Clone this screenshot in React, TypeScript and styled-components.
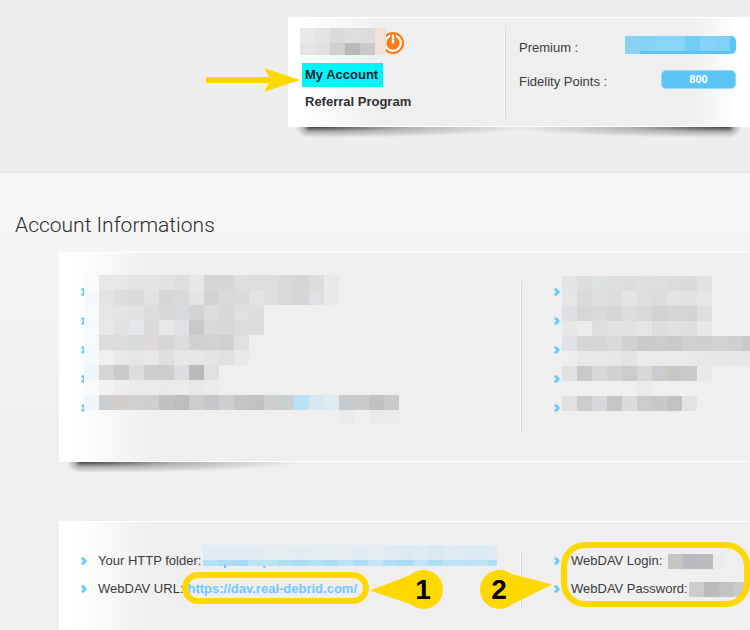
import React from 'react';
import styled, { createGlobalStyle, css } from 'styled-components';

const BLUE = '#5bc5f5';
const YELLOW = '#ffd800';

const GlobalStyle = createGlobalStyle`
  *, *::before, *::after { box-sizing: border-box; }
  body {
    margin: 0;
    background: #efefef;
    color: #3a3a3a;
    font: 13px/24px "Liberation Sans", Arial, sans-serif;
  }
`;

const Page = styled.div`
  overflow: hidden;
`;

const Header = styled.header`
  padding: 17px 0 44px 288px;
  background: #eeeeee;
  border-bottom: 2px solid #e3e3e3;
`;

const Main = styled.main`
  padding: 38px 0 0 59px;
  background: linear-gradient(#f7f7f7, #efefef 290px);
`;

const Title = styled.h2`
  margin: 0 0 13px -44px;
  color: #2c2c2c;
  font: 300 21px/28px Roboto, "Noto Sans", sans-serif;
`;

const shadowLeft = css`
  radial-gradient(ellipse 14px 11px at 100% 0, rgba(0,0,0,.72), rgba(0,0,0,.25) 45%, transparent) 8px 0 / 14px 12px no-repeat,
  radial-gradient(ellipse 220px 11px at 0 0, rgba(0,0,0,.72), rgba(0,0,0,.25) 45%, transparent) 22px 0 / 220px 12px no-repeat
`;
const shadowRight = css`
  radial-gradient(ellipse 14px 11px at 0 0, rgba(0,0,0,.72), rgba(0,0,0,.25) 45%, transparent) right 8px top 0 / 14px 12px no-repeat,
  radial-gradient(ellipse 220px 11px at 100% 0, rgba(0,0,0,.72), rgba(0,0,0,.25) 45%, transparent) right 22px top 0 / 220px 12px no-repeat
`;

const Panel = styled.section<{ $aside: number; $bothSides?: boolean }>`
  position: relative;
  display: grid;
  grid-template-columns: minmax(0, 1fr) 2px ${p => p.$aside}px;
  border: solid #fff;
  border-width: 1px 0;
  background:
    ${p => p.$bothSides && 'linear-gradient(270deg, #fff 12px, transparent 60px),'}
    linear-gradient(90deg, #fff 15px, #efefef 92px);

  & + & {
    margin-top: 59px;
    border-bottom: 0;
  }

  &::after {
    content: '';
    position: absolute;
    top: calc(100% + 1px);
    left: 0;
    right: 0;
    height: 12px;
    background: ${shadowLeft}${p => p.$bothSides && css`, ${shadowRight}`};
  }
`;

const Divider = styled.div<{ $top: number; $bottom: number }>`
  margin: ${p => p.$top}px 0 ${p => p.$bottom}px;
  border-left: 1px solid #f8f8f8;
  border-right: 1px solid #d9d9d9;
`;

const UserColumn = styled.div`
  padding: 10px 12px 0;
`;

const UserRow = styled.div`
  display: flex;
  align-items: flex-start;
  margin-bottom: 8px;
`;

const UserName = styled.div`
  position: relative;
  z-index: 1;
`;

const LogoutButton = styled.button`
  margin: 4px 0 0 -4px;
  padding: 0;
  border: 0;
  background: none;
  line-height: 0;
  cursor: pointer;
`;

const Nav = styled.nav`
  display: flex;
  flex-direction: column;
  align-items: flex-start;
  gap: 3px;
  margin-left: 2px;
`;

const NavLink = styled.a<{ $active?: boolean }>`
  position: relative;
  padding: 0 5px 0 3px;
  color: ${p => (p.$active ? '#112233' : '#2f2f33')};
  background: ${p => (p.$active ? '#00f6f6' : 'transparent')};
  font-weight: bold;
  text-decoration: none;
`;

const StatColumn = styled.dl`
  display: flex;
  flex-direction: column;
  gap: 10px;
  margin: 0;
  padding: 17px 14px 33px 13px;
`;

const Stat = styled.div`
  display: flex;
  justify-content: space-between;
  align-items: flex-start;
  height: 24px;
  line-height: 26px;
`;

const Badge = styled.dd<{ $wide?: boolean }>`
  width: ${p => (p.$wide ? 111 : 75)}px;
  height: ${p => (p.$wide ? 18 : 19)}px;
  margin: 1px 0 0;
  overflow: hidden;
  border-radius: ${p => (p.$wide ? '0 5px 5px 0' : '5px')};
  border: ${p => (p.$wide ? '0' : '1px solid #9bdaf7')};
  background: ${BLUE};
  color: #fff;
  font-size: 11px;
  font-weight: bold;
  line-height: 17px;
  text-align: center;
`;

const Column = styled.div<{ $indent: number; $bottom: number }>`
  position: relative;
  padding: 25px 0 ${p => p.$bottom}px ${p => p.$indent}px;
`;

const List = styled.ul<{ $gap?: number }>`
  display: grid;
  grid-auto-rows: 28px;
  row-gap: ${p => p.$gap ?? 0}px;
  margin: 0;
  padding: 0;
  list-style: none;
`;

const Item = styled.li`
  display: flex;
  align-items: center;
  gap: 10px;
  white-space: nowrap;
`;

const Value = styled.span`
  display: flex;
  align-items: center;
`;

const Redacted = styled.span<{ $gap: number }>`
  margin-left: ${p => p.$gap}px;
`;

const UrlLink = styled.a`
  position: relative;
  margin-left: 4px;
  color: #6ccaff;
  font-weight: bold;
  text-decoration: none;
`;

const Ring = styled.span`
  position: absolute;
  inset: -5px -12px -3px -6px;
  border: 6px solid ${YELLOW};
  border-radius: 16px;
  pointer-events: none;
`;

const GroupRing = styled.div`
  position: absolute;
  inset: 20px 0 auto 39px;
  height: 65px;
  border: 6px solid ${YELLOW};
  border-radius: 24px;
  pointer-events: none;
`;

const Overlay = styled.div<{ $left: number; $top: number }>`
  position: absolute;
  left: ${p => p.$left}px;
  top: ${p => p.$top}px;
  line-height: 0;
  pointer-events: none;
`;

const MosaicSvg = styled.svg`
  display: block;
  flex: none;
`;

type MosaicProps = { rows: string[]; width: number; height: number; marks?: React.ReactNode };

/* Rows of blocks, 15px each; "-" leaves a block clear. */
const Mosaic = ({ rows, width, height, marks }: MosaicProps) => (
  <MosaicSvg width={width} height={height} shapeRendering="crispEdges" aria-hidden="true">
    {rows.flatMap((row, y) =>
      row.split(' ').map((c, x) =>
        c === '-' ? null : <rect key={`${x}-${y}`} x={x * 15} y={y * 15} width="15" height="15" fill={`#${c}`} />,
      ),
    )}
    {marks}
  </MosaicSvg>
);

const Chevron = () => (
  <svg width="7" height="8" viewBox="0 0 7 8" aria-hidden="true">
    <path d="M0 1.6 1.6 0 3.2 .8 6 4 3.2 7.2 1.6 8 0 6.4 2.2 4Z" fill="#66caff" />
  </svg>
);

const PowerIcon = () => (
  <svg width="22" height="22" viewBox="0 0 22 22" aria-hidden="true">
    <circle cx="11" cy="11" r="11" fill="#ff7a14" />
    <circle cx="11" cy="11" r="7.8" fill="none" stroke="#fff" strokeWidth="2.2" />
    <path d="M8 1.500h6v8H8z" fill="#ff7a14" />
    <path d="M9.800 2.500h2.400v9h-2.400z" fill="#fff" />
  </svg>
);

const PointerArrow = () => (
  <svg width="94" height="24" viewBox="0 0 94 24" aria-hidden="true">
    <path d="M0 9H63L58 0 94 12 58 24 63 15H0Z" fill={YELLOW} />
  </svg>
);

const Callout = ({ label, left }: { label: string; left?: boolean }) => (
  <svg width="73" height="39" viewBox="0 0 73 39" role="img" aria-label={`Step ${label}`}>
    <circle cx={left ? 53.5 : 19.5} cy="19.5" r="19.5" fill={YELLOW} />
    <path d={left ? 'M0 20.500 43 4V35Z' : 'M72 14.500 28 3 33 34Z'} fill={YELLOW} />
    <text
      x={left ? 53 : 19}
      y="29"
      fill="#000"
      fontFamily="Liberation Sans, Arial, sans-serif"
      fontSize="28"
      fontWeight="bold"
      textAnchor="middle"
    >
      {label}
    </text>
  </svg>
);

const userName = ['e9e9e9 e4e4e4 dbdbdb dedede dcdcdc f0e2d8', 'e4e4e4 e0e0e0 d0d0d0 b9b9b9 c9c9c9 f0e2d8'];
const premium = ['8ad2f3 84d3f7 88d5f7 88d5f7 72cdf5 84d3f7 7fd1f6', '8ad2f3'];

const leftInfo = [
  'fafafa e8e8e8 e7e7e7 e3e3e3 e4e4e4 e2e2e2 dedede e5e8e7 d6d6d6 d6d6d6 dddfe0 dedede dcdfde d9d9d9 d6d6d6 dadcde ebe9e7',
  'f2f8fb e3e3e1 dddddd dbdbdb e3e2e0 d6d6d6 d9d9d9 e4e4e4 d3d3d3 d9dbda d9dcdb e3e3e1 dcdfde d9d9d9 d6d6d6 dee0e3 ebe9e7',
  'f4f9fc e7e5e2 e4e4e4 e2e2e2 dcdcdb d8d8d8 d6d9dd d4d4d4 dddddd d8d8d6 e0e0e0 dedddb',
  'f4f9fc eae8e5 e1e1e1 e4e7ea dcdbd9 e8e8e8 e0e2e5 c7cac9 d9d9d9 d8d8d6 dcdcdc dedddb',
  'f4f9fc dcdcdc dcdcdc d6dad9 dddad9 d6d6d6 dedddb d0d2d1 d1d3d2 d1cfcf e0e0e0',
  'f4f9fc efefef e9e9e9 e5e5e5 e8e8e8 dfdfdd e7e7e7 e6e6e6 e4e4e2 e0e0e0 e8e8e8',
  'edf6f9 d6d6d4 cbcac8 dddddd cdcdcd cdcfce dcdde0 bababa e1e0de',
  'fafafa f2f2f2 eeeeee ebebeb ebebeb e9e9e9 ebebeb e8e8e8 ebebeb',
  'eff6fa cdced0 d3cecb d0d0d0 cfcfcf c0c1c3 bdbdbd cdcdcb c4c6c9 cfcfcf c7c5c3 c1c1c3 cfcfcd c8cfd1 b9e0f5 d6e7f2 dfeaf1 c8cacc cbc9c7 c1c1c1 cacaca',
  '- - - - - - - - - - - - - - - - - ebebeb - eaeaea ebebeb',
];

const rightInfo = [
  'e4e4e4 dddddd dde1e0 dedede dddddb dfdfdf dededc dadddc dbdbdb e1e1e1',
  'e5e5e5 dadada dde0df dfdddb e4e4e4 dedede dcdcda e3e3e1 e2e2e2 e6e6e4',
  'dddfe2 d7d7d7 dadada d5d5d5 dddddd d9d9d9 d2d2d0 d5d5d5 d4d4d2 dedede',
  'e6e8e8 ececec dedede e2e2e2 e2e2e2 e5e5e5 dddddd e1e1e1 dfdfdf e7e7e7',
  'e0e2e5 d5d5d3 d6d6d6 d9dcdb d1d1cf cacaca cbcbcb c9c9c9 cfd1d0 cecfcf d3d3d1 ced0cf cac9c7',
  'eeeeee e8e8e8 e8e8e8 e6e6e6 e3e3e3 ebebeb eaeaea ebebeb e8e9e9 e7e7e7 e7e7e7 e6e6e6 e6e8e7',
  'e1e1e1 c9c9c9 d8d8d8 d1d1d1 caccca d7d7d7 c9cbce c9c7c4 c9c9c9 ebe9e7',
  '- - - - - ebebeb',
  'e0e0e0 cbcbcb d6d8db c8c6c4 dadbdd cacccb c8c8c6 c2c2c2 e3e3e1',
];

const httpFolder = [
  'e2ebf2 e2ebf2 e2ebf2 e2ebf2 e4ecf0 e4ecf0 e1ecf2 e4ecf0 e2ecf1 e6ebf0 dfecf1 e4ecf2 dfebf1 dbeaf1 dfebf2 d8e9f2 deebf0 dbebf1 d8eaf3 e1eaf2',
  'b6e0f7 aedcf6 a6daf7 bce2f7 bce2f7 b2def6 acdcf8 b8e0f6 acdcf7 bfe2f7 b0def8 c4e3f5 b2dff8 aadbf7 c2e2f5 aedef8 c0e2f5 bbe1f6 c0e2f5 aedef9',
];

const hiddenItems = [0, 1, 2, 3, 4];

const HiddenList = () => (
  <List $gap={1}>
    {hiddenItems.map(i => (
      <Item key={i}>
        <Chevron />
      </Item>
    ))}
  </List>
);

export default function App() {
  return (
    <Page>
      <GlobalStyle />
      <Header>
        <Panel $aside={244} $bothSides>
          <UserColumn>
            <UserRow>
              <UserName>
                <Mosaic rows={userName} width={86} height={27} />
              </UserName>
              <LogoutButton type="button" aria-label="Log out">
                <PowerIcon />
              </LogoutButton>
            </UserRow>
            <Nav>
              <NavLink href="#account" $active>
                My Account
                <Overlay as="span" $left={-96} $top={5}>
                  <PointerArrow />
                </Overlay>
              </NavLink>
              <NavLink href="#referral">Referral Program</NavLink>
            </Nav>
          </UserColumn>
          <Divider $top={10} $bottom={8} />
          <StatColumn>
            <Stat>
              <dt>Premium :</dt>
              <Badge $wide>
                <Mosaic rows={premium} width={105} height={18} />
              </Badge>
            </Stat>
            <Stat>
              <dt>Fidelity Points :</dt>
              <Badge>800</Badge>
            </Stat>
          </StatColumn>
        </Panel>
      </Header>
      <Main>
        <Title>Account Informations</Title>
        <Panel $aside={228}>
          <Column $indent={22} $bottom={39}>
            <HiddenList />
            <Overlay $left={25} $top={22}>
              <Mosaic rows={leftInfo} width={315} height={150} />
            </Overlay>
          </Column>
          <Divider $top={28} $bottom={26} />
          <Column $indent={32} $bottom={39}>
            <HiddenList />
            <Overlay $left={40} $top={23}>
              <Mosaic rows={rightInfo} width={195} height={135} />
            </Overlay>
          </Column>
        </Panel>
        <Panel $aside={228}>
          <Column $indent={22} $bottom={27}>
            <List>
              <Item>
                <Chevron />
                <Value>Your HTTP folder:</Value>
              </Item>
              <Item>
                <Chevron />
                <Value>
                  WebDAV URL:
                  <UrlLink href="https://dav.real-debrid.com/">
                    https://dav.real-debrid.com/
                    <Ring />
                    <Overlay as="span" $left={182} $top={-7}>
                      <Callout label="1" left />
                    </Overlay>
                  </UrlLink>
                </Value>
              </Item>
            </List>
            <Overlay $left={144} $top={23}>
              <Mosaic
                rows={httpFolder}
                width={294}
                height={23}
                marks={
                  <>
                    <rect x="0" y="21" width="294" height="2" fill="#efefef" />
                    <rect x="21" y="20" width="2" height="3" fill="#6ccaff" />
                    <rect x="60" y="21" width="3" height="2" fill="#8fd4fb" />
                  </>
                }
              />
            </Overlay>
          </Column>
          <Divider $top={28} $bottom={19} />
          <Column $indent={32} $bottom={27}>
            <List>
              <Item>
                <Chevron />
                <Value>
                  WebDAV Login:
                  <Redacted $gap={6}>
                    <Mosaic rows={['c6c5c4 b9bac0 bcbcbc ececec']} width={57} height={15} />
                  </Redacted>
                </Value>
              </Item>
              <Item>
                <Chevron />
                <Value>
                  WebDAV Password:
                  <Redacted $gap={1}>
                    <Mosaic rows={['cacbcc bcbaba c2c2c0 cacaca']} width={56} height={15} />
                  </Redacted>
                </Value>
              </Item>
            </List>
            <GroupRing />
            <Overlay $left={-42} $top={48}>
              <Callout label="2" />
            </Overlay>
          </Column>
        </Panel>
      </Main>
    </Page>
  );
}
